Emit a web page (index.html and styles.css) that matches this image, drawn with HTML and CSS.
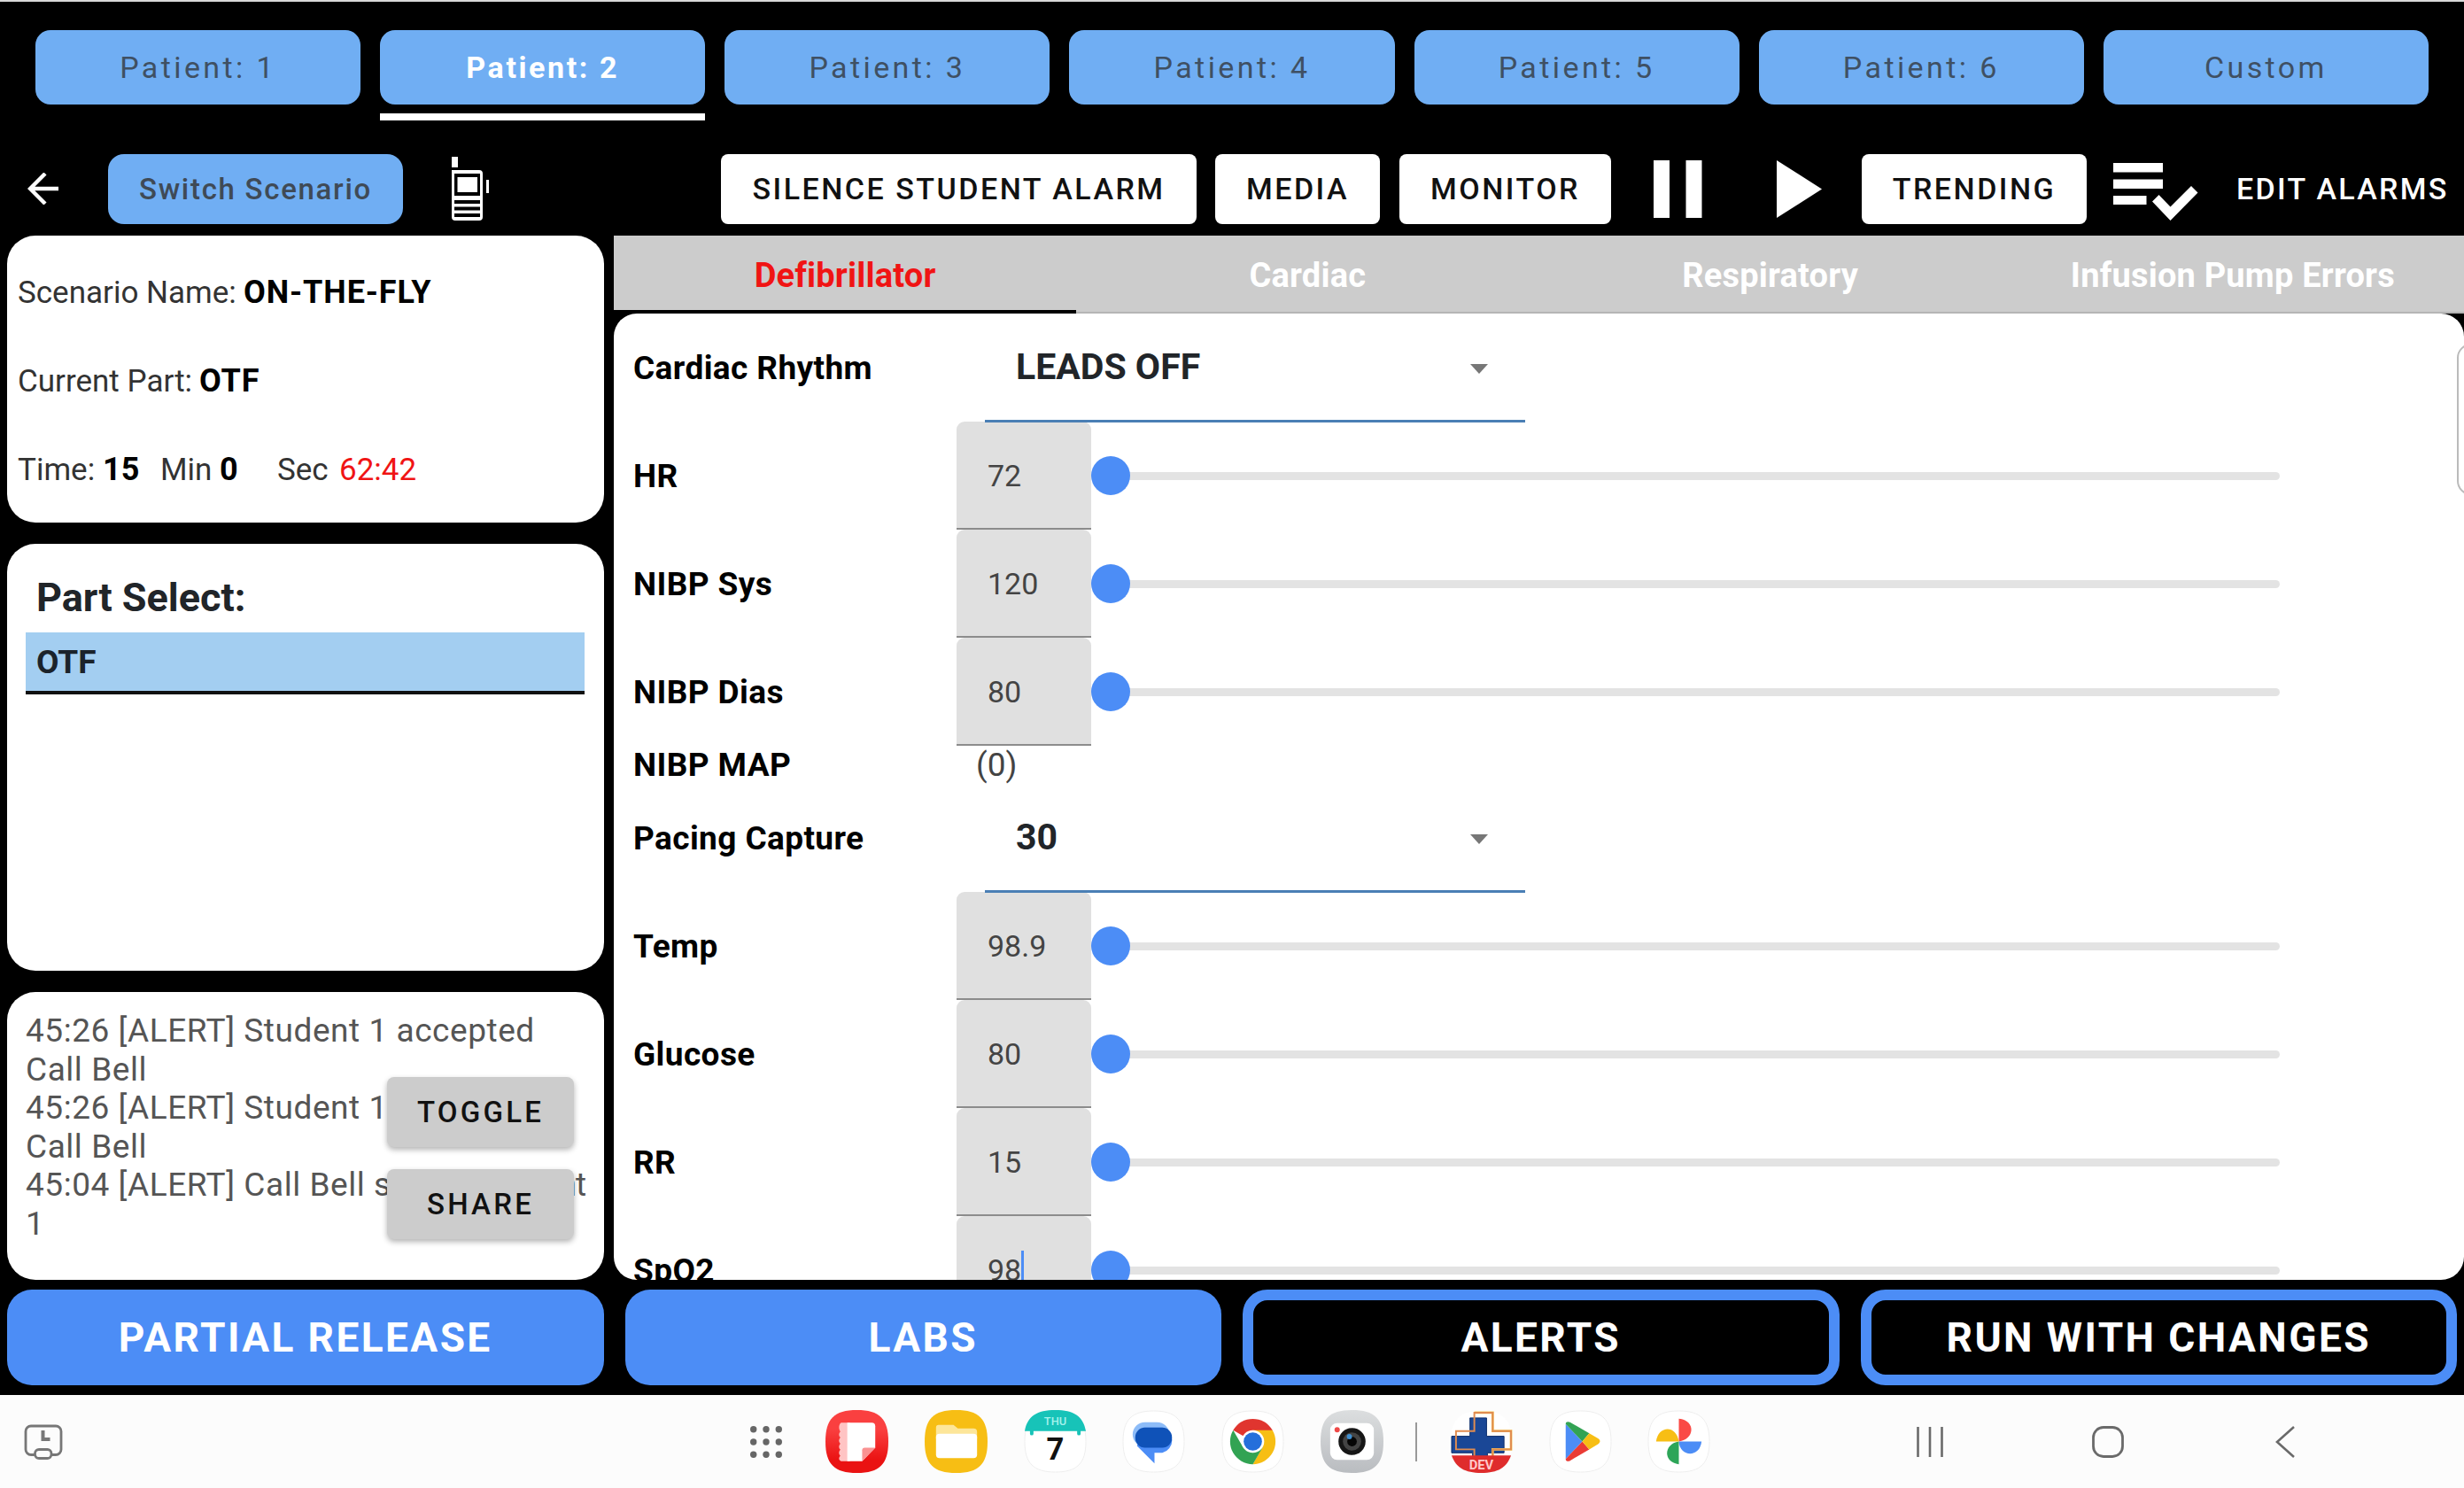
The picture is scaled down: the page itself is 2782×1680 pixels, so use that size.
FILE: index.html
```html
<!DOCTYPE html>
<html lang="en">
<head>
    <meta charset="UTF-8">
    <meta name="viewport" content="width=device-width, initial-scale=1.0">
    <title>Scenario Control</title>
    <link rel="stylesheet" href="styles.css">
</head>
<body>
    <div class="app">
        <div class="patients">
            <button class="patient">Patient: 1</button>
            <button class="patient active">Patient: 2</button>
            <button class="patient">Patient: 3</button>
            <button class="patient">Patient: 4</button>
            <button class="patient">Patient: 5</button>
            <button class="patient">Patient: 6</button>
            <button class="patient">Custom</button>
        </div>

        <div class="toolbar">
            <svg class="back" viewBox="0 0 36 36"><path d="M20 1 L3 18 L20 35 M3 18 H35" fill="none" stroke="#fff" stroke-width="4.4"/></svg>
            <button class="switch">Switch Scenario</button>
            <svg class="radio" viewBox="0 0 42 72">
                <path fill="#fff" d="M0 0h7v12H0zM39 26h3v15h-3zM4 15h27a4 4 0 0 1 4 4v49a4 4 0 0 1-4 4H4a4 4 0 0 1-4-4V15z"/>
                <path fill="#000" d="M3 19h29v25H3zM3 49h29v4H3zM3 56.500h29v4H3zM3 64h29v4H3z"/>
                <path fill="#fff" d="M6.500 23h22.500v17H6.500z"/>
            </svg>
            <div class="actions">
                <button class="tool silence">SILENCE STUDENT ALARM</button>
                <button class="tool media">MEDIA</button>
                <button class="tool monitor">MONITOR</button>
                <svg class="pause" viewBox="0 0 55 65"><path fill="#fff" d="M0 0h18v65H0zM36.500 0h18v65h-18z"/></svg>
                <svg class="play" viewBox="0 0 51 65"><path fill="#fff" d="M0 0l51 32.500L0 65z"/></svg>
                <button class="tool trending">TRENDING</button>
                <svg class="check" viewBox="0 0 96 65"><path fill="#fff" d="M0 0h56v10.500H0zM0 18.500h56V29H0zM0 37h37.500v10H0zM44 43.500l7.500-7.500 13 13.500L88 26l7.500 7.500L64.500 65z"/></svg>
                <span class="edit">EDIT ALARMS</span>
            </div>
        </div>

        <div class="main">
            <div class="left">
                <div class="panel info">
                    <div class="line"><span class="k1">Scenario Name:</span><b class="name">ON-THE-FLY</b></div>
                    <div class="line"><span class="k2">Current Part:</span><b class="name">OTF</b></div>
                    <div class="line"><span class="k3">Time:</span><b class="mins">15</b><span class="k4">Min</span><b class="secs">0</b><span class="k5">Sec</span><span class="left-time">62:42</span></div>
                </div>
                <div class="panel parts">
                    <h2>Part Select:</h2>
                    <div class="part">OTF</div>
                </div>
                <div class="panel log">
                    <p>45:26 [ALERT] Student 1 accepted<br>Call Bell</p>
                    <p>45:26 [ALERT] Student 1 accepted<br>Call Bell</p>
                    <p>45:04 [ALERT] Call Bell s<span class="tight">ent to Studen</span>t<br>1</p>
                    <div class="log-btns">
                        <button>TOGGLE</button>
                        <button>SHARE</button>
                    </div>
                </div>
            </div>

            <div class="right">
                <div class="tabs">
                    <div class="tab selected">Defibrillator</div>
                    <div class="tab">Cardiac</div>
                    <div class="tab">Respiratory</div>
                    <div class="tab">Infusion Pump Errors</div>
                </div>
                <div class="vitals">
                    <div class="row"><label>Cardiac Rhythm</label><div class="select"><span>LEADS OFF</span><i class="arrow"></i></div></div>
                    <div class="row"><label>HR</label><div class="field">72</div><div class="slider"><i class="thumb"></i></div></div>
                    <div class="row"><label>NIBP Sys</label><div class="field">120</div><div class="slider"><i class="thumb"></i></div></div>
                    <div class="row"><label>NIBP Dias</label><div class="field">80</div><div class="slider"><i class="thumb"></i></div></div>
                    <div class="row map"><label>NIBP MAP</label><span class="map-value">(0)</span></div>
                    <div class="row"><label>Pacing Capture</label><div class="select"><span>30</span><i class="arrow"></i></div></div>
                    <div class="row"><label>Temp</label><div class="field">98.9</div><div class="slider"><i class="thumb"></i></div></div>
                    <div class="row"><label>Glucose</label><div class="field">80</div><div class="slider"><i class="thumb"></i></div></div>
                    <div class="row"><label>RR</label><div class="field">15</div><div class="slider"><i class="thumb"></i></div></div>
                    <div class="row"><label>SpO2</label><div class="field">98<i class="caret"></i></div><div class="slider"><i class="thumb"></i></div></div>
                    <div class="edge-handle"></div>
                </div>
            </div>
        </div>

        <div class="bottom">
            <button class="fill">PARTIAL RELEASE</button>
            <button class="fill">LABS</button>
            <button class="outline">ALERTS</button>
            <button class="outline">RUN WITH CHANGES</button>
        </div>
    </div>

    <div class="navbar">
        <svg class="clock" viewBox="0 0 44 40" fill="none" stroke="#777" stroke-width="2.800">
            <path d="M12 34.500H8a6 6 0 0 1-6-6V8a6 6 0 0 1 6-6h28a6 6 0 0 1 6 6v20.500a6 6 0 0 1-6 6h-4"/>
            <rect x="12.500" y="28.500" width="18.500" height="10" rx="4.500"/>
            <path d="M21.500 7v10h8" stroke-width="4"/>
        </svg>
        <svg class="grid" viewBox="0 0 36 36" fill="#666">
            <circle cx="3.700" cy="3.700" r="3.700"/><circle cx="18" cy="3.700" r="3.700"/><circle cx="32.300" cy="3.700" r="3.700"/>
            <circle cx="3.700" cy="18" r="3.700"/><circle cx="18" cy="18" r="3.700"/><circle cx="32.300" cy="18" r="3.700"/>
            <circle cx="3.700" cy="32.300" r="3.700"/><circle cx="18" cy="32.300" r="3.700"/><circle cx="32.300" cy="32.300" r="3.700"/>
        </svg>
        <div class="dock">
            <!-- notes -->
            <svg viewBox="0 0 72 72">
                <defs><linearGradient id="red" x1="0" y1="0" x2="0" y2="1"><stop offset=".3" stop-color="#fa4040"/><stop offset=".8" stop-color="#ea1212"/></linearGradient></defs>
                <path fill="url(#red)" d="M36 0C62 0 72 10 72 36S62 72 36 72 0 62 0 36 10 0 36 0z"/>
                <path fill="#ffc4c4" d="M18 14.500h10v44H18c-3-1-3-4-1-6-2-2-2-5 0-7-2-2-2-5 0-7-2-2-2-5 0-7-2-2-2-5 0-7-2-3-2-8 1-10z"/>
                <path fill="#fff" d="M25 14.500h28a4 4 0 0 1 4 4V43L42 58.500H25z"/>
                <path fill="#fa9292" d="M57 43L42 58.500V46a3 3 0 0 1 3-3z"/>
            </svg>
            <!-- files -->
            <svg viewBox="0 0 72 72">
                <path fill="#f7be14" d="M36 0C62 0 72 10 72 36S62 72 36 72 0 62 0 36 10 0 36 0z"/>
                <path fill="#fde69a" d="M13 20a3 3 0 0 1 3-3h17l5 4h18a4 4 0 0 1 4 4v8H13z"/>
                <rect x="13" y="27" width="47" height="28" rx="4" fill="#fff"/>
            </svg>
            <!-- calendar -->
            <svg viewBox="0 0 72 72">
                <path class="tile" d="M36 1C61 1 71 11 71 36S61 71 36 71 1 61 1 36 11 1 36 1z"/>
                <path fill="#17c3b8" d="M36 0C57 0 68 7 71 24H65v3a2 2 0 0 1-4 0v-3H11v3a2 2 0 0 1-4 0v-3H1C4 7 15 0 36 0z"/>
                <text x="36" y="17.500" class="cal-day">THU</text>
                <text x="36" y="57" class="cal-num">7</text>
            </svg>
            <!-- messages -->
            <svg viewBox="0 0 72 72">
                <path class="tile" d="M36 1C61 1 71 11 71 36S61 71 36 71 1 61 1 36 11 1 36 1z"/>
                <rect x="12" y="14" width="42" height="28" rx="14" fill="#8dbcf8"/>
                <path fill="#4c8df6" d="M24 20h22a15 15 0 0 1 0 29H37v12L17 41z"/>
                <rect x="15" y="20" width="42" height="23" rx="11" fill="#0f52b8"/>
            </svg>
            <!-- browser -->
            <svg viewBox="0 0 72 72">
                <path class="tile" d="M36 1C61 1 71 11 71 36S61 71 36 71 1 61 1 36 11 1 36 1z"/>
                <path fill="#e0352f" d="M36 36L13.500 23a26 26 0 0 1 45 0z"/>
                <path fill="#f7be14" d="M36 23H58.500A26 26 0 0 1 36 62L47 42.500z"/>
                <path fill="#32a353" d="M13.500 23l11.300 19.500L36 49l11.300-6.500L36 62A26 26 0 0 1 13.500 23z"/>
                <circle cx="36" cy="36" r="13" fill="#fff"/>
                <circle cx="36" cy="36" r="10.500" fill="#246fdb"/>
            </svg>
            <!-- camera -->
            <svg viewBox="0 0 72 72">
                <defs><linearGradient id="grey" x1="0" y1="0" x2="0" y2="1"><stop offset="0" stop-color="#dcdedf"/><stop offset="1" stop-color="#b9bcc0"/></linearGradient></defs>
                <path fill="url(#grey)" d="M36 0C62 0 72 10 72 36S62 72 36 72 0 62 0 36 10 0 36 0z"/>
                <rect x="11" y="15" width="50" height="42" rx="8" fill="#fff"/>
                <circle cx="19" cy="22.500" r="3" fill="#ef4a48"/>
                <circle cx="36" cy="36" r="15.500" fill="#161616"/>
                <circle cx="36" cy="36" r="10.500" fill="#444"/>
                <circle cx="36" cy="36" r="5.500" fill="#050505"/>
                <circle cx="33" cy="30.500" r="3" fill="#3f8fd0"/>
            </svg>
            <span class="divider"></span>
            <!-- simulator dev build -->
            <svg viewBox="0 0 72 72">
                <path fill="#fff" d="M36 1C61 1 71 11 71 36S61 71 36 71 1 61 1 36 11 1 36 1z"/>
                <path fill="#1a4796" stroke="#0d2e6b" d="M23 9h19v21h20v19H43v9H26v-9H2V30h21z"/>
                <path fill="none" stroke="#f6c75a" stroke-width="2.800" d="M28 3h21v21h21v21H49v12"/>
                <path fill="none" stroke="#e08c50" stroke-width="2" d="M49 52v-7h21V24H49V3H28v21H7v21h21v10"/>
                <path fill="#df2c2c" d="M2 52h68C65 66 55 72 36 72S7 66 2 52z"/>
                <text x="36" y="67.500" class="dev">DEV</text>
            </svg>
            <!-- store -->
            <svg viewBox="0 0 72 72">
                <path class="tile" d="M36 1C61 1 71 11 71 36S61 71 36 71 1 61 1 36 11 1 36 1z"/>
                <path fill="#4c8df6" d="M19 16v40l19-20z"/>
                <path fill="#32a353" d="M19 16c0-3 3-3 5-2l22 12.500-8 9.500z"/>
                <path fill="#ea3b35" d="M19 56c0 3 3 3 5 2l22-13-8-9z"/>
                <path fill="#f7be14" d="M46 26.500l10 6c3 2 3 4.500 0 6.500l-10 6-8-9z"/>
            </svg>
            <!-- photos -->
            <svg viewBox="0 0 72 72">
                <path class="tile" d="M36 1C61 1 71 11 71 36S61 71 36 71 1 61 1 36 11 1 36 1z"/>
                <path fill="#fa4a45" d="M36 10c20 2 18 24 0 26z"/>
                <path fill="#4c8df6" d="M36 36h26c-2 19-25 18-26 0z"/>
                <path fill="#2da558" d="M36 36v26c-18-2-18-23 0-26z"/>
                <path fill="#f7be14" d="M36 36H10c2-18 23-20 26 0z"/>
            </svg>
        </div>
        <svg class="recents" viewBox="0 0 30 34"><path d="M1.500 0v34M15 0v34M28.500 0v34" stroke="#6a6a6a" stroke-width="2.600"/></svg>
        <svg class="home" viewBox="0 0 36 36"><rect x="1.500" y="1.500" width="33" height="33" rx="11.500" fill="none" stroke="#6a6a6a" stroke-width="2.800"/></svg>
        <svg class="prev" viewBox="0 0 22 36"><path d="M21 1L2 18l19 17" fill="none" stroke="#6a6a6a" stroke-width="2.600"/></svg>
    </div>
</body>
</html>
```
FILE: styles.css
```css
* {
    box-sizing: border-box;
}
body {
    margin: 0;
    width: 2782px;
    height: 1680px;
    overflow: hidden;
    font-family: Roboto, "Liberation Sans", sans-serif;
    background-color: #000;
}
button {
    flex: none;
    font-family: inherit;
    border: none;
    padding: 0;
    font-weight: 500;
}
svg {
    display: block;
    flex: none;
}
.app {
    height: 1575px;
    background-color: #000;
    border-top: 2px solid #d8d8d8;
}

/* patient buttons */
.patients {
    display: flex;
    gap: 22px;
    padding: 32px 40px 0;
    height: 171px;
}
.patient {
    flex: 1;
    position: relative;
    height: 84px;
    border-radius: 17px;
    background-color: #70aef3;
    color: #3f5063;
    font-size: 34px;
    font-weight: 400;
    letter-spacing: 3.4px;
}
.patient.active {
    color: white;
    font-weight: 700;
    letter-spacing: 2.6px;
}
.patient.active::after {
    content: "";
    position: absolute;
    left: 0;
    right: 0;
    top: 94px;
    height: 8px;
    background-color: white;
}

/* toolbar */
.toolbar {
    display: flex;
    align-items: center;
    height: 80px;
    padding-left: 31px;
}
.back {
    width: 36px;
    height: 36px;
}
.switch {
    width: 333px;
    height: 79px;
    margin-left: 55px;
    border-radius: 18px;
    background-color: #70aef3;
    color: #3f4a56;
    font-size: 33px;
    letter-spacing: 1.7px;
}
.radio {
    width: 42px;
    height: 72px;
    margin-left: 55px;
}
.actions {
    display: flex;
    align-items: center;
    margin-left: 262px;
}
.tool {
    height: 79px;
    border-radius: 8px;
    background-color: white;
    color: #111;
    font-size: 34px;
    letter-spacing: 2.5px;
}
.silence {
    width: 537px;
}
.media {
    width: 186px;
    margin-left: 21px;
}
.monitor {
    width: 239px;
    margin-left: 22px;
}
.pause {
    width: 55px;
    height: 65px;
    margin-left: 48px;
}
.play {
    width: 51px;
    height: 65px;
    margin-left: 84px;
}
.trending {
    width: 254px;
    margin-left: 45px;
}
.check {
    width: 96px;
    height: 65px;
    margin-left: 30px;
    margin-top: 6px;
}
.edit {
    margin-left: 43px;
    color: white;
    font-size: 34px;
    font-weight: 500;
    letter-spacing: 2.3px;
    white-space: nowrap;
}

/* left column */
.main {
    display: flex;
    height: 1179px;
    margin-top: 13px;
}
.left {
    width: 674px;
    margin-left: 8px;
    margin-right: 11px;
    display: flex;
    flex-direction: column;
    gap: 24px;
}
.panel {
    background-color: white;
    border-radius: 32px;
    position: relative;
}
.info {
    height: 324px;
    padding: 14px 12px 0;
    font-size: 35px;
    color: #333;
}
.info .line {
    display: flex;
    align-items: center;
    height: 100px;
    white-space: nowrap;
}
.info b {
    color: #000;
    font-size: 36px;
}
.info .name {
    letter-spacing: .9px;
}
.k1 {
    width: 255px;
}
.k2 {
    width: 205px;
}
.k3 {
    width: 96px;
}
.mins {
    width: 65px;
}
.k4 {
    width: 67px;
}
.secs {
    width: 65px;
}
.k5 {
    width: 70px;
}
.left-time {
    color: #f01414;
}
.parts {
    height: 482px;
    padding: 34px 22px 0 21px;
}
.parts h2 {
    margin: 0;
    padding-left: 12px;
    font-size: 45px;
    line-height: 54px;
    font-weight: 700;
    color: #212529;
}
.part {
    height: 70px;
    margin-top: 12px;
    padding-left: 12px;
    background-color: #a3cef1;
    border-bottom: 4px solid #111;
    font-size: 37px;
    line-height: 67px;
    font-weight: 700;
    color: #1b232b;
}
.log {
    flex: 1;
    padding: 22px 21px 0;
    overflow: hidden;
}
.log p {
    margin: 0;
    font-size: 37px;
    line-height: 43.5px;
    letter-spacing: .55px;
    color: #555;
    white-space: nowrap;
}
.tight {
    letter-spacing: -.8px;
}
.log-btns {
    position: absolute;
    top: 96px;
    left: 429px;
    display: flex;
    flex-direction: column;
    gap: 25px;
}
.log-btns button {
    width: 211px;
    height: 79px;
    border-radius: 8px;
    background-color: #ccc;
    color: #111;
    font-size: 33px;
    letter-spacing: 3.2px;
    box-shadow: 0 3px 6px rgba(0, 0, 0, .3);
}

/* right column */
.right {
    flex: 1;
    display: flex;
    flex-direction: column;
}
.tabs {
    display: flex;
    height: 88px;
    background-color: #ccc;
    border-bottom: 2px solid #b5b5b5;
}
.tab {
    flex: 1;
    height: 88px;
    line-height: 90px;
    text-align: center;
    font-size: 38px;
    font-weight: 700;
    letter-spacing: .2px;
    color: white;
}
.tab.selected {
    color: #f01414;
    border-bottom: 4px solid #000;
}
.vitals {
    position: relative;
    flex: 1;
    background-color: white;
    border-radius: 26px;
    overflow: hidden;
}
.row {
    display: flex;
    align-items: center;
    height: 122px;
    padding-left: 22px;
}
.row label {
    width: 365px;
    font-size: 37px;
    font-weight: 700;
    letter-spacing: .4px;
    color: #000;
}
.row.map {
    height: 43px;
}
.map-value {
    padding-left: 22px;
    font-size: 37px;
    color: #444;
}
.select {
    position: relative;
    z-index: 1;
    display: flex;
    align-items: center;
    justify-content: space-between;
    width: 610px;
    height: 123px;
    margin-left: 32px;
    padding: 1px 42px 0 35px;
    border-bottom: 3px solid #4a7fb5;
    font-size: 41px;
    font-weight: 700;
    color: #212529;
}
.arrow {
    margin-top: 4px;
    border: 10px solid transparent;
    border-top: 11px solid #777;
    border-bottom: none;
}
.field {
    display: flex;
    align-items: center;
    width: 152px;
    height: 122px;
    padding-top: 2px;
    padding-left: 35px;
    background-color: #e0e0e0;
    border-bottom: 2px solid #8c8c8c;
    border-radius: 9px 9px 0 0;
    font-size: 34px;
    color: #444;
}
.caret {
    width: 3px;
    height: 44px;
    background-color: #4c8df6;
}
.slider {
    display: flex;
    align-items: center;
    width: 1342px;
    height: 9px;
    border-radius: 5px;
    background-color: #e3e3e3;
}
.thumb {
    width: 44px;
    height: 44px;
    border-radius: 50%;
    background-color: #4c8df6;
}
.edge-handle {
    position: absolute;
    top: 34px;
    right: -30px;
    width: 38px;
    height: 171px;
    border: 2px solid #bbb;
    border-radius: 16px;
}

/* bottom buttons */
.bottom {
    display: grid;
    grid-template-columns: repeat(4, 1fr);
    gap: 24px;
    padding: 11px 8px 0;
}
.bottom button {
    height: 108px;
    border-radius: 28px;
    color: white;
    font-size: 46px;
    font-weight: 700;
    letter-spacing: 2.4px;
}
.fill {
    background-color: #4c8df6;
}
.bottom .outline {
    background-color: #000;
    border: 12px solid #4c8df6;
}

/* system navigation */
.navbar {
    display: flex;
    align-items: center;
    height: 105px;
    background-color: #fcfcfc;
}
.clock {
    width: 44px;
    height: 40px;
    margin-left: 27px;
}
.grid {
    width: 36px;
    height: 36px;
    margin-left: 776px;
}
.dock {
    display: flex;
    align-items: center;
    margin-left: 49px;
}
.dock svg {
    width: 71px;
    height: 71px;
    margin-right: 40.8px;
}
.divider {
    width: 2px;
    height: 44px;
    margin-left: -5px;
    margin-right: 37px;
    background-color: #999;
}
.tile {
    fill: #fff;
    stroke: #eee;
}
.cal-day {
    font-size: 13px;
    font-weight: 500;
    fill: #a5f2ec;
    text-anchor: middle;
}
.cal-num {
    font-size: 35px;
    font-weight: 700;
    fill: #111;
    text-anchor: middle;
}
.dev {
    font-size: 15px;
    font-weight: 700;
    fill: #ffc9c9;
    text-anchor: middle;
}
.recents {
    width: 30px;
    height: 34px;
    margin-left: 192px;
}
.home {
    width: 36px;
    height: 36px;
    margin-left: 168px;
}
.prev {
    width: 22px;
    height: 36px;
    margin-left: 171px;
}
```
